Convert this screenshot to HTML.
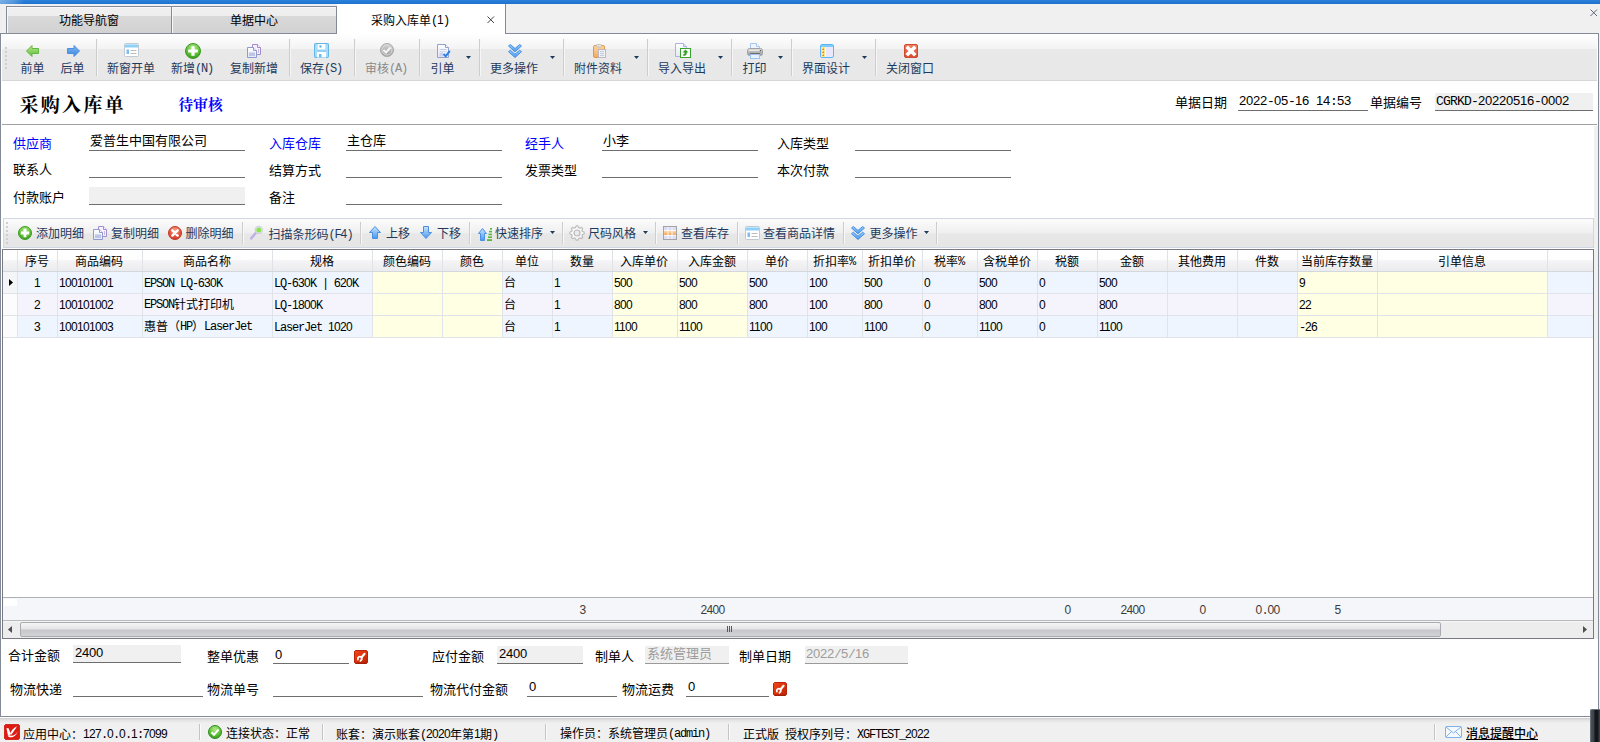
<!DOCTYPE html>
<html lang="zh-CN"><head><meta charset="utf-8"><title>采购入库单</title>
<style>
html,body{margin:0;padding:0}
body{width:1600px;height:742px;overflow:hidden;background:#f0f0f0;position:relative;
 font-family:"Liberation Mono","Noto Sans CJK SC",sans-serif;font-size:12px;color:#000}
.r{position:absolute}
.t{position:absolute;white-space:nowrap;line-height:14px;height:14px}
.c{text-align:center}
.l,.d{position:relative;top:-1px}
.l{letter-spacing:-1.2px}
.f13 .l{letter-spacing:-0.8px}
.d{font-family:'Liberation Sans',sans-serif;letter-spacing:-0.674px}
.f13 .d{letter-spacing:-0.23px}
.nv{color:#1e395b}
.bl{color:#0000ff}
.f13{font-size:13px;line-height:15px;height:15px}
.gy{color:#8a8a8a}
svg{position:absolute;overflow:visible}
</style></head>
<body>
<div class="r" style="left:0px;top:0px;width:1600px;height:4px;background:linear-gradient(#2b80d8,#1c73d0);"></div>
<div class="r" style="left:0px;top:0px;width:24px;height:4px;background:linear-gradient(100deg,rgba(255,255,255,.38) 0,rgba(255,255,255,.22) 55%,rgba(255,255,255,0) 100%);"></div>
<div class="r" style="left:6px;top:6px;width:166px;height:27px;box-sizing:border-box;border:1px solid #848a97;border-bottom:none;background:linear-gradient(#f0f0f0 0,#eeeeee 9px,#d9d9d9 9px,#d2d2d2 100%);box-shadow:inset 1px 1px 0 #f8f8f8"></div>
<div class="t c " style="left:6px;top:15px;width:166px;">功能导航窗</div>
<div class="r" style="left:171px;top:6px;width:166px;height:27px;box-sizing:border-box;border:1px solid #848a97;border-bottom:none;background:linear-gradient(#f0f0f0 0,#eeeeee 9px,#d9d9d9 9px,#d2d2d2 100%);box-shadow:inset 1px 1px 0 #f8f8f8"></div>
<div class="t c " style="left:171px;top:15px;width:166px;">单据中心</div>
<div class="r" style="left:0;top:33px;width:1599px;height:684px;box-sizing:border-box;border:1px solid #848a97;background:#fff"></div>
<div class="r" style="left:337px;top:4px;width:168px;height:30px;background:#fff;"></div>
<div class="r" style="left:505px;top:4px;width:1px;height:30px;background:#848a97;"></div>
<div class="t c " style="left:337px;top:14px;width:146px;">采购入库单<span class="l">(</span><span class="d">1</span><span class="l">)</span></div>
<svg style="left:486px;top:15px" width="10" height="10" viewBox="0 0 10 10"><path d="M1.5 1.5L8 8M8 1.5L1.5 8" stroke="#444" stroke-width="1" fill="none"/></svg>
<svg style="left:1589px;top:8px" width="10" height="10" viewBox="0 0 10 10"><path d="M1.5 1.5L8 8M8 1.5L1.5 8" stroke="#5d6678" stroke-width="1" fill="none"/></svg>
<div class="r" style="left:2px;top:34px;width:1595px;height:46px;background:linear-gradient(#ffffff 0,#f3f3f3 15px,#e9e9e9 15px,#e8e8e8 100%);"></div>
<div class="r" style="left:2px;top:80px;width:1595px;height:1px;background:#d6d6d6;"></div>
<div class="r" style="left:5px;top:47px;width:2px;height:2px;background:#cfcfcf;"></div>
<div class="r" style="left:5px;top:51px;width:2px;height:2px;background:#cfcfcf;"></div>
<div class="r" style="left:5px;top:55px;width:2px;height:2px;background:#cfcfcf;"></div>
<div class="r" style="left:5px;top:59px;width:2px;height:2px;background:#cfcfcf;"></div>
<div class="r" style="left:5px;top:63px;width:2px;height:2px;background:#cfcfcf;"></div>
<div class="r" style="left:5px;top:67px;width:2px;height:2px;background:#cfcfcf;"></div>
<div class="r" style="left:96px;top:39px;width:1px;height:37px;background:#cdcdcd;"></div>
<div class="r" style="left:97px;top:39px;width:1px;height:37px;background:#f6f6f6;"></div>
<div class="r" style="left:289px;top:39px;width:1px;height:37px;background:#cdcdcd;"></div>
<div class="r" style="left:290px;top:39px;width:1px;height:37px;background:#f6f6f6;"></div>
<div class="r" style="left:354px;top:39px;width:1px;height:37px;background:#cdcdcd;"></div>
<div class="r" style="left:355px;top:39px;width:1px;height:37px;background:#f6f6f6;"></div>
<div class="r" style="left:419px;top:39px;width:1px;height:37px;background:#cdcdcd;"></div>
<div class="r" style="left:420px;top:39px;width:1px;height:37px;background:#f6f6f6;"></div>
<div class="r" style="left:479px;top:39px;width:1px;height:37px;background:#cdcdcd;"></div>
<div class="r" style="left:480px;top:39px;width:1px;height:37px;background:#f6f6f6;"></div>
<div class="r" style="left:563px;top:39px;width:1px;height:37px;background:#cdcdcd;"></div>
<div class="r" style="left:564px;top:39px;width:1px;height:37px;background:#f6f6f6;"></div>
<div class="r" style="left:647px;top:39px;width:1px;height:37px;background:#cdcdcd;"></div>
<div class="r" style="left:648px;top:39px;width:1px;height:37px;background:#f6f6f6;"></div>
<div class="r" style="left:731px;top:39px;width:1px;height:37px;background:#cdcdcd;"></div>
<div class="r" style="left:732px;top:39px;width:1px;height:37px;background:#f6f6f6;"></div>
<div class="r" style="left:791px;top:39px;width:1px;height:37px;background:#cdcdcd;"></div>
<div class="r" style="left:792px;top:39px;width:1px;height:37px;background:#f6f6f6;"></div>
<div class="r" style="left:875px;top:39px;width:1px;height:37px;background:#cdcdcd;"></div>
<div class="r" style="left:876px;top:39px;width:1px;height:37px;background:#f6f6f6;"></div>
<div class="t c nv" style="left:-7.5px;top:63px;width:80px;">前单</div>
<div class="t c nv" style="left:32.5px;top:63px;width:80px;">后单</div>
<div class="t c nv" style="left:91px;top:63px;width:80px;">新窗开单</div>
<div class="t c nv" style="left:152px;top:63px;width:80px;">新增<span class="l">(N)</span></div>
<div class="t c nv" style="left:214px;top:63px;width:80px;">复制新增</div>
<div class="t c nv" style="left:281px;top:63px;width:80px;">保存<span class="l">(S)</span></div>
<div class="t c gy" style="left:346px;top:63px;width:80px;">审核<span class="l">(A)</span></div>
<div class="t c nv" style="left:402.5px;top:63px;width:80px;">引单</div>
<svg style="left:466px;top:56px" width="5" height="3" viewBox="0 0 5 3"><path d="M0 0H5L2.5 3Z" fill="#1e395b"/></svg>
<div class="t c nv" style="left:474px;top:63px;width:80px;">更多操作</div>
<svg style="left:550px;top:56px" width="5" height="3" viewBox="0 0 5 3"><path d="M0 0H5L2.5 3Z" fill="#1e395b"/></svg>
<div class="t c nv" style="left:558px;top:63px;width:80px;">附件资料</div>
<svg style="left:634px;top:56px" width="5" height="3" viewBox="0 0 5 3"><path d="M0 0H5L2.5 3Z" fill="#1e395b"/></svg>
<div class="t c nv" style="left:642px;top:63px;width:80px;">导入导出</div>
<svg style="left:718px;top:56px" width="5" height="3" viewBox="0 0 5 3"><path d="M0 0H5L2.5 3Z" fill="#1e395b"/></svg>
<div class="t c nv" style="left:714.5px;top:63px;width:80px;">打印</div>
<svg style="left:778px;top:56px" width="5" height="3" viewBox="0 0 5 3"><path d="M0 0H5L2.5 3Z" fill="#1e395b"/></svg>
<div class="t c nv" style="left:786px;top:63px;width:80px;">界面设计</div>
<svg style="left:862px;top:56px" width="5" height="3" viewBox="0 0 5 3"><path d="M0 0H5L2.5 3Z" fill="#1e395b"/></svg>
<div class="t c nv" style="left:870px;top:63px;width:80px;">关闭窗口</div>
<div class="t " style="left:19.5px;top:93px;letter-spacing:2.3px;font:bold 19px/26px 'Liberation Serif','Noto Serif CJK SC',serif;height:26px">采购入库单</div>
<div class="t bl" style="left:178.5px;top:96px;font:bold 14.7px/18px 'Liberation Serif','Noto Serif CJK SC',serif;height:18px">待审核</div>
<div class="t f13" style="left:1175px;top:96px;">单据日期</div>
<div class="t f13" style="left:1370px;top:96px;">单据编号</div>
<div class="t f13" style="left:1239px;top:94px;"><span class="d">2022</span><span class="l">-</span><span class="d">05</span><span class="l">-</span><span class="d">16</span><span class="l">&nbsp;</span><span class="d">14</span><span class="l">:</span><span class="d">53</span></div>
<div class="r" style="left:1238px;top:110px;width:130px;height:1px;background:#6e6e6e;"></div>
<div class="r" style="left:1435px;top:93px;width:158px;height:17px;background:#f0f0f0;"></div>
<div class="r" style="left:1435px;top:110px;width:158px;height:1px;background:#6e6e6e;"></div>
<div class="t f13" style="left:1436px;top:94px;"><span class="l">CGRKD-</span><span class="d">20220516</span><span class="l">-</span><span class="d">0002</span></div>
<div class="r" style="left:2px;top:124px;width:1595px;height:1px;background:#a0a0a0;"></div>
<div class="t f13 bl" style="left:13px;top:137px;">供应商</div>
<div class="r" style="left:89px;top:150px;width:156px;height:1px;background:#6e6e6e;"></div>
<div class="t f13" style="left:90px;top:134px;">爱普生中国有限公司</div>
<div class="t f13 bl" style="left:269px;top:137px;">入库仓库</div>
<div class="r" style="left:346px;top:150px;width:156px;height:1px;background:#6e6e6e;"></div>
<div class="t f13" style="left:347px;top:134px;">主仓库</div>
<div class="t f13 bl" style="left:525px;top:137px;">经手人</div>
<div class="r" style="left:602px;top:150px;width:156px;height:1px;background:#6e6e6e;"></div>
<div class="t f13" style="left:603px;top:134px;">小李</div>
<div class="t f13" style="left:777px;top:137px;">入库类型</div>
<div class="r" style="left:855px;top:150px;width:156px;height:1px;background:#6e6e6e;"></div>
<div class="t f13" style="left:13px;top:163px;">联系人</div>
<div class="r" style="left:89px;top:177px;width:156px;height:1px;background:#6e6e6e;"></div>
<div class="t f13" style="left:269px;top:164px;">结算方式</div>
<div class="r" style="left:346px;top:177px;width:156px;height:1px;background:#6e6e6e;"></div>
<div class="t f13" style="left:525px;top:164px;">发票类型</div>
<div class="r" style="left:602px;top:177px;width:156px;height:1px;background:#6e6e6e;"></div>
<div class="t f13" style="left:777px;top:164px;">本次付款</div>
<div class="r" style="left:855px;top:177px;width:156px;height:1px;background:#6e6e6e;"></div>
<div class="t f13" style="left:13px;top:191px;">付款账户</div>
<div class="r" style="left:89px;top:187px;width:156px;height:17px;background:#f0f0f0;"></div>
<div class="r" style="left:89px;top:204px;width:156px;height:1px;background:#6e6e6e;"></div>
<div class="t f13" style="left:269px;top:191px;">备注</div>
<div class="r" style="left:346px;top:204px;width:156px;height:1px;background:#6e6e6e;"></div>
<div class="r" style="left:1594px;top:126px;width:4px;height:513px;background:#f0f0f0;"></div>
<div class="r" style="left:3px;top:218px;width:1591px;height:30px;background:linear-gradient(#fcfcfc 0,#efefef 14px,#e7e7e7 15px,#e6e6e6 100%);box-sizing:border-box;border:1px solid #cfd7e2"></div>
<div class="r" style="left:6px;top:222px;width:2px;height:2px;background:#cfcfcf;"></div>
<div class="r" style="left:6px;top:226px;width:2px;height:2px;background:#cfcfcf;"></div>
<div class="r" style="left:6px;top:230px;width:2px;height:2px;background:#cfcfcf;"></div>
<div class="r" style="left:6px;top:234px;width:2px;height:2px;background:#cfcfcf;"></div>
<div class="r" style="left:6px;top:238px;width:2px;height:2px;background:#cfcfcf;"></div>
<div class="r" style="left:6px;top:242px;width:2px;height:2px;background:#cfcfcf;"></div>
<div class="r" style="left:242px;top:222px;width:1px;height:22px;background:#cdcdcd;"></div>
<div class="r" style="left:243px;top:222px;width:1px;height:22px;background:#f8f8f8;"></div>
<div class="r" style="left:360px;top:222px;width:1px;height:22px;background:#cdcdcd;"></div>
<div class="r" style="left:361px;top:222px;width:1px;height:22px;background:#f8f8f8;"></div>
<div class="r" style="left:469px;top:222px;width:1px;height:22px;background:#cdcdcd;"></div>
<div class="r" style="left:470px;top:222px;width:1px;height:22px;background:#f8f8f8;"></div>
<div class="r" style="left:562px;top:222px;width:1px;height:22px;background:#cdcdcd;"></div>
<div class="r" style="left:563px;top:222px;width:1px;height:22px;background:#f8f8f8;"></div>
<div class="r" style="left:655px;top:222px;width:1px;height:22px;background:#cdcdcd;"></div>
<div class="r" style="left:656px;top:222px;width:1px;height:22px;background:#f8f8f8;"></div>
<div class="r" style="left:737px;top:222px;width:1px;height:22px;background:#cdcdcd;"></div>
<div class="r" style="left:738px;top:222px;width:1px;height:22px;background:#f8f8f8;"></div>
<div class="r" style="left:843px;top:222px;width:1px;height:22px;background:#cdcdcd;"></div>
<div class="r" style="left:844px;top:222px;width:1px;height:22px;background:#f8f8f8;"></div>
<div class="r" style="left:936px;top:222px;width:1px;height:22px;background:#cdcdcd;"></div>
<div class="r" style="left:937px;top:222px;width:1px;height:22px;background:#f8f8f8;"></div>
<div class="t nv" style="left:36px;top:228px;">添加明细</div>
<div class="t nv" style="left:111px;top:228px;">复制明细</div>
<div class="t nv" style="left:185.5px;top:228px;">删除明细</div>
<div class="t nv" style="left:268.5px;top:228px;">扫描条形码<span class="l">(F</span><span class="d">4</span><span class="l">)</span></div>
<div class="t nv" style="left:386px;top:228px;">上移</div>
<div class="t nv" style="left:437px;top:228px;">下移</div>
<div class="t nv" style="left:495px;top:228px;">快速排序</div>
<div class="t nv" style="left:588px;top:228px;">尺码风格</div>
<div class="t nv" style="left:681px;top:228px;">查看库存</div>
<div class="t nv" style="left:763px;top:228px;">查看商品详情</div>
<div class="t nv" style="left:869.5px;top:228px;">更多操作</div>
<svg style="left:550px;top:231px" width="5" height="3" viewBox="0 0 5 3"><path d="M0 0H5L2.5 3Z" fill="#1e395b"/></svg>
<svg style="left:643px;top:231px" width="5" height="3" viewBox="0 0 5 3"><path d="M0 0H5L2.5 3Z" fill="#1e395b"/></svg>
<svg style="left:924px;top:231px" width="5" height="3" viewBox="0 0 5 3"><path d="M0 0H5L2.5 3Z" fill="#1e395b"/></svg>
<div class="r" style="left:2px;top:249px;width:1592px;height:390px;background:#fff;box-sizing:border-box;border:1px solid #777a82"></div>
<div class="r" style="left:3px;top:250px;width:1590px;height:21px;background:linear-gradient(#ffffff 0,#fdfdfd 45%,#f4f4f6 52%,#ececef 100%);"></div>
<div class="r" style="left:3px;top:271px;width:1590px;height:1px;background:#d3d7de;"></div>
<div class="r" style="left:17px;top:250px;width:1px;height:21px;background:#e0e2e7;"></div>
<div class="r" style="left:57px;top:250px;width:1px;height:21px;background:#e0e2e7;"></div>
<div class="r" style="left:142px;top:250px;width:1px;height:21px;background:#e0e2e7;"></div>
<div class="r" style="left:272px;top:250px;width:1px;height:21px;background:#e0e2e7;"></div>
<div class="r" style="left:372px;top:250px;width:1px;height:21px;background:#e0e2e7;"></div>
<div class="r" style="left:442px;top:250px;width:1px;height:21px;background:#e0e2e7;"></div>
<div class="r" style="left:502px;top:250px;width:1px;height:21px;background:#e0e2e7;"></div>
<div class="r" style="left:552px;top:250px;width:1px;height:21px;background:#e0e2e7;"></div>
<div class="r" style="left:612px;top:250px;width:1px;height:21px;background:#e0e2e7;"></div>
<div class="r" style="left:677px;top:250px;width:1px;height:21px;background:#e0e2e7;"></div>
<div class="r" style="left:747px;top:250px;width:1px;height:21px;background:#e0e2e7;"></div>
<div class="r" style="left:807px;top:250px;width:1px;height:21px;background:#e0e2e7;"></div>
<div class="r" style="left:862px;top:250px;width:1px;height:21px;background:#e0e2e7;"></div>
<div class="r" style="left:922px;top:250px;width:1px;height:21px;background:#e0e2e7;"></div>
<div class="r" style="left:977px;top:250px;width:1px;height:21px;background:#e0e2e7;"></div>
<div class="r" style="left:1037px;top:250px;width:1px;height:21px;background:#e0e2e7;"></div>
<div class="r" style="left:1097px;top:250px;width:1px;height:21px;background:#e0e2e7;"></div>
<div class="r" style="left:1167px;top:250px;width:1px;height:21px;background:#e0e2e7;"></div>
<div class="r" style="left:1237px;top:250px;width:1px;height:21px;background:#e0e2e7;"></div>
<div class="r" style="left:1297px;top:250px;width:1px;height:21px;background:#e0e2e7;"></div>
<div class="r" style="left:1377px;top:250px;width:1px;height:21px;background:#e0e2e7;"></div>
<div class="r" style="left:1547px;top:250px;width:1px;height:21px;background:#e0e2e7;"></div>
<div class="t " style="left:25px;top:256px;">序号</div>
<div class="t " style="left:75px;top:256px;">商品编码</div>
<div class="t " style="left:183px;top:256px;">商品名称</div>
<div class="t " style="left:310px;top:256px;">规格</div>
<div class="t " style="left:383px;top:256px;">颜色编码</div>
<div class="t " style="left:460px;top:256px;">颜色</div>
<div class="t " style="left:515px;top:256px;">单位</div>
<div class="t " style="left:570px;top:256px;">数量</div>
<div class="t " style="left:620px;top:256px;">入库单价</div>
<div class="t " style="left:688px;top:256px;">入库金额</div>
<div class="t " style="left:765px;top:256px;">单价</div>
<div class="t " style="left:813px;top:256px;">折扣率<span class="l">%</span></div>
<div class="t " style="left:868px;top:256px;">折扣单价</div>
<div class="t " style="left:934px;top:256px;">税率<span class="l">%</span></div>
<div class="t " style="left:983px;top:256px;">含税单价</div>
<div class="t " style="left:1055px;top:256px;">税额</div>
<div class="t " style="left:1120px;top:256px;">金额</div>
<div class="t " style="left:1178px;top:256px;">其他费用</div>
<div class="t " style="left:1255px;top:256px;">件数</div>
<div class="t " style="left:1301px;top:256px;">当前库存数量</div>
<div class="t " style="left:1438px;top:256px;">引单信息</div>
<div class="r" style="left:3px;top:272px;width:14px;height:21px;background:#f4f5f7;"></div>
<div class="r" style="left:18px;top:272px;width:1575px;height:21px;background:#eef5fe;"></div>
<div class="r" style="left:1298px;top:272px;width:79px;height:21px;background:#ffffe3;"></div>
<div class="r" style="left:373px;top:272px;width:69px;height:21px;background:#ffffe3;"></div>
<div class="r" style="left:443px;top:272px;width:59px;height:21px;background:#ffffe3;"></div>
<div class="r" style="left:1378px;top:272px;width:169px;height:21px;background:#ffffe3;"></div>
<div class="r" style="left:613px;top:272px;width:64px;height:21px;background:#ffffe3;"></div>
<div class="r" style="left:678px;top:272px;width:69px;height:21px;background:#ffffe3;"></div>
<div class="r" style="left:3px;top:293px;width:1590px;height:1px;background:#e0e3e8;"></div>
<div class="r" style="left:17px;top:272px;width:1px;height:21px;background:#e0e3e8;"></div>
<div class="r" style="left:57px;top:272px;width:1px;height:21px;background:#e0e3e8;"></div>
<div class="r" style="left:142px;top:272px;width:1px;height:21px;background:#e0e3e8;"></div>
<div class="r" style="left:272px;top:272px;width:1px;height:21px;background:#e0e3e8;"></div>
<div class="r" style="left:372px;top:272px;width:1px;height:21px;background:#e0e3e8;"></div>
<div class="r" style="left:442px;top:272px;width:1px;height:21px;background:#e0e3e8;"></div>
<div class="r" style="left:502px;top:272px;width:1px;height:21px;background:#e0e3e8;"></div>
<div class="r" style="left:552px;top:272px;width:1px;height:21px;background:#e0e3e8;"></div>
<div class="r" style="left:612px;top:272px;width:1px;height:21px;background:#e0e3e8;"></div>
<div class="r" style="left:677px;top:272px;width:1px;height:21px;background:#e0e3e8;"></div>
<div class="r" style="left:747px;top:272px;width:1px;height:21px;background:#e0e3e8;"></div>
<div class="r" style="left:807px;top:272px;width:1px;height:21px;background:#e0e3e8;"></div>
<div class="r" style="left:862px;top:272px;width:1px;height:21px;background:#e0e3e8;"></div>
<div class="r" style="left:922px;top:272px;width:1px;height:21px;background:#e0e3e8;"></div>
<div class="r" style="left:977px;top:272px;width:1px;height:21px;background:#e0e3e8;"></div>
<div class="r" style="left:1037px;top:272px;width:1px;height:21px;background:#e0e3e8;"></div>
<div class="r" style="left:1097px;top:272px;width:1px;height:21px;background:#e0e3e8;"></div>
<div class="r" style="left:1167px;top:272px;width:1px;height:21px;background:#e0e3e8;"></div>
<div class="r" style="left:1237px;top:272px;width:1px;height:21px;background:#e0e3e8;"></div>
<div class="r" style="left:1297px;top:272px;width:1px;height:21px;background:#e0e3e8;"></div>
<div class="r" style="left:1377px;top:272px;width:1px;height:21px;background:#e0e3e8;"></div>
<div class="r" style="left:1547px;top:272px;width:1px;height:21px;background:#e0e3e8;"></div>
<div class="t " style="left:34px;top:277px;"><span class="d">1</span></div>
<div class="t " style="left:59px;top:277px;"><span class="d">100101001</span></div>
<div class="t " style="left:144px;top:277px;"><span class="l">EPSON&nbsp;LQ-</span><span class="d">630</span><span class="l">K</span></div>
<div class="t " style="left:274px;top:277px;"><span class="l">LQ-</span><span class="d">630</span><span class="l">K&nbsp;|&nbsp;</span><span class="d">620</span><span class="l">K</span></div>
<div class="t " style="left:504px;top:277px;">台</div>
<div class="t " style="left:554px;top:277px;"><span class="d">1</span></div>
<div class="t " style="left:614px;top:277px;"><span class="d">500</span></div>
<div class="t " style="left:679px;top:277px;"><span class="d">500</span></div>
<div class="t " style="left:749px;top:277px;"><span class="d">500</span></div>
<div class="t " style="left:809px;top:277px;"><span class="d">100</span></div>
<div class="t " style="left:864px;top:277px;"><span class="d">500</span></div>
<div class="t " style="left:924px;top:277px;"><span class="d">0</span></div>
<div class="t " style="left:979px;top:277px;"><span class="d">500</span></div>
<div class="t " style="left:1039px;top:277px;"><span class="d">0</span></div>
<div class="t " style="left:1099px;top:277px;"><span class="d">500</span></div>
<div class="t " style="left:1299px;top:277px;"><span class="d">9</span></div>
<div class="r" style="left:3px;top:294px;width:14px;height:21px;background:#fcfcfd;"></div>
<div class="r" style="left:18px;top:294px;width:1575px;height:21px;background:#f5f3fc;"></div>
<div class="r" style="left:1298px;top:294px;width:79px;height:21px;background:#ffffe3;"></div>
<div class="r" style="left:373px;top:294px;width:69px;height:21px;background:#ffffe3;"></div>
<div class="r" style="left:443px;top:294px;width:59px;height:21px;background:#ffffe3;"></div>
<div class="r" style="left:1378px;top:294px;width:169px;height:21px;background:#ffffe3;"></div>
<div class="r" style="left:613px;top:294px;width:64px;height:21px;background:#ffffe3;"></div>
<div class="r" style="left:678px;top:294px;width:69px;height:21px;background:#ffffe3;"></div>
<div class="r" style="left:3px;top:315px;width:1590px;height:1px;background:#e0e3e8;"></div>
<div class="r" style="left:17px;top:294px;width:1px;height:21px;background:#e0e3e8;"></div>
<div class="r" style="left:57px;top:294px;width:1px;height:21px;background:#e0e3e8;"></div>
<div class="r" style="left:142px;top:294px;width:1px;height:21px;background:#e0e3e8;"></div>
<div class="r" style="left:272px;top:294px;width:1px;height:21px;background:#e0e3e8;"></div>
<div class="r" style="left:372px;top:294px;width:1px;height:21px;background:#e0e3e8;"></div>
<div class="r" style="left:442px;top:294px;width:1px;height:21px;background:#e0e3e8;"></div>
<div class="r" style="left:502px;top:294px;width:1px;height:21px;background:#e0e3e8;"></div>
<div class="r" style="left:552px;top:294px;width:1px;height:21px;background:#e0e3e8;"></div>
<div class="r" style="left:612px;top:294px;width:1px;height:21px;background:#e0e3e8;"></div>
<div class="r" style="left:677px;top:294px;width:1px;height:21px;background:#e0e3e8;"></div>
<div class="r" style="left:747px;top:294px;width:1px;height:21px;background:#e0e3e8;"></div>
<div class="r" style="left:807px;top:294px;width:1px;height:21px;background:#e0e3e8;"></div>
<div class="r" style="left:862px;top:294px;width:1px;height:21px;background:#e0e3e8;"></div>
<div class="r" style="left:922px;top:294px;width:1px;height:21px;background:#e0e3e8;"></div>
<div class="r" style="left:977px;top:294px;width:1px;height:21px;background:#e0e3e8;"></div>
<div class="r" style="left:1037px;top:294px;width:1px;height:21px;background:#e0e3e8;"></div>
<div class="r" style="left:1097px;top:294px;width:1px;height:21px;background:#e0e3e8;"></div>
<div class="r" style="left:1167px;top:294px;width:1px;height:21px;background:#e0e3e8;"></div>
<div class="r" style="left:1237px;top:294px;width:1px;height:21px;background:#e0e3e8;"></div>
<div class="r" style="left:1297px;top:294px;width:1px;height:21px;background:#e0e3e8;"></div>
<div class="r" style="left:1377px;top:294px;width:1px;height:21px;background:#e0e3e8;"></div>
<div class="r" style="left:1547px;top:294px;width:1px;height:21px;background:#e0e3e8;"></div>
<div class="t " style="left:34px;top:299px;"><span class="d">2</span></div>
<div class="t " style="left:59px;top:299px;"><span class="d">100101002</span></div>
<div class="t " style="left:144px;top:299px;"><span class="l">EPSON</span>针式打印机</div>
<div class="t " style="left:274px;top:299px;"><span class="l">LQ-</span><span class="d">1800</span><span class="l">K</span></div>
<div class="t " style="left:504px;top:299px;">台</div>
<div class="t " style="left:554px;top:299px;"><span class="d">1</span></div>
<div class="t " style="left:614px;top:299px;"><span class="d">800</span></div>
<div class="t " style="left:679px;top:299px;"><span class="d">800</span></div>
<div class="t " style="left:749px;top:299px;"><span class="d">800</span></div>
<div class="t " style="left:809px;top:299px;"><span class="d">100</span></div>
<div class="t " style="left:864px;top:299px;"><span class="d">800</span></div>
<div class="t " style="left:924px;top:299px;"><span class="d">0</span></div>
<div class="t " style="left:979px;top:299px;"><span class="d">800</span></div>
<div class="t " style="left:1039px;top:299px;"><span class="d">0</span></div>
<div class="t " style="left:1099px;top:299px;"><span class="d">800</span></div>
<div class="t " style="left:1299px;top:299px;"><span class="d">22</span></div>
<div class="r" style="left:3px;top:316px;width:14px;height:21px;background:#fcfcfd;"></div>
<div class="r" style="left:18px;top:316px;width:1575px;height:21px;background:#eef5fe;"></div>
<div class="r" style="left:1298px;top:316px;width:79px;height:21px;background:#ffffe3;"></div>
<div class="r" style="left:373px;top:316px;width:69px;height:21px;background:#ffffe3;"></div>
<div class="r" style="left:443px;top:316px;width:59px;height:21px;background:#ffffe3;"></div>
<div class="r" style="left:1378px;top:316px;width:169px;height:21px;background:#ffffe3;"></div>
<div class="r" style="left:613px;top:316px;width:64px;height:21px;background:#ffffe3;"></div>
<div class="r" style="left:678px;top:316px;width:69px;height:21px;background:#ffffe3;"></div>
<div class="r" style="left:3px;top:337px;width:1590px;height:1px;background:#e0e3e8;"></div>
<div class="r" style="left:17px;top:316px;width:1px;height:21px;background:#e0e3e8;"></div>
<div class="r" style="left:57px;top:316px;width:1px;height:21px;background:#e0e3e8;"></div>
<div class="r" style="left:142px;top:316px;width:1px;height:21px;background:#e0e3e8;"></div>
<div class="r" style="left:272px;top:316px;width:1px;height:21px;background:#e0e3e8;"></div>
<div class="r" style="left:372px;top:316px;width:1px;height:21px;background:#e0e3e8;"></div>
<div class="r" style="left:442px;top:316px;width:1px;height:21px;background:#e0e3e8;"></div>
<div class="r" style="left:502px;top:316px;width:1px;height:21px;background:#e0e3e8;"></div>
<div class="r" style="left:552px;top:316px;width:1px;height:21px;background:#e0e3e8;"></div>
<div class="r" style="left:612px;top:316px;width:1px;height:21px;background:#e0e3e8;"></div>
<div class="r" style="left:677px;top:316px;width:1px;height:21px;background:#e0e3e8;"></div>
<div class="r" style="left:747px;top:316px;width:1px;height:21px;background:#e0e3e8;"></div>
<div class="r" style="left:807px;top:316px;width:1px;height:21px;background:#e0e3e8;"></div>
<div class="r" style="left:862px;top:316px;width:1px;height:21px;background:#e0e3e8;"></div>
<div class="r" style="left:922px;top:316px;width:1px;height:21px;background:#e0e3e8;"></div>
<div class="r" style="left:977px;top:316px;width:1px;height:21px;background:#e0e3e8;"></div>
<div class="r" style="left:1037px;top:316px;width:1px;height:21px;background:#e0e3e8;"></div>
<div class="r" style="left:1097px;top:316px;width:1px;height:21px;background:#e0e3e8;"></div>
<div class="r" style="left:1167px;top:316px;width:1px;height:21px;background:#e0e3e8;"></div>
<div class="r" style="left:1237px;top:316px;width:1px;height:21px;background:#e0e3e8;"></div>
<div class="r" style="left:1297px;top:316px;width:1px;height:21px;background:#e0e3e8;"></div>
<div class="r" style="left:1377px;top:316px;width:1px;height:21px;background:#e0e3e8;"></div>
<div class="r" style="left:1547px;top:316px;width:1px;height:21px;background:#e0e3e8;"></div>
<div class="t " style="left:34px;top:321px;"><span class="d">3</span></div>
<div class="t " style="left:59px;top:321px;"><span class="d">100101003</span></div>
<div class="t " style="left:144px;top:321px;">惠普（<span class="l">HP</span>）<span class="l">LaserJet</span></div>
<div class="t " style="left:274px;top:321px;"><span class="l">LaserJet&nbsp;</span><span class="d">1020</span></div>
<div class="t " style="left:504px;top:321px;">台</div>
<div class="t " style="left:554px;top:321px;"><span class="d">1</span></div>
<div class="t " style="left:614px;top:321px;"><span class="d">1100</span></div>
<div class="t " style="left:679px;top:321px;"><span class="d">1100</span></div>
<div class="t " style="left:749px;top:321px;"><span class="d">1100</span></div>
<div class="t " style="left:809px;top:321px;"><span class="d">100</span></div>
<div class="t " style="left:864px;top:321px;"><span class="d">1100</span></div>
<div class="t " style="left:924px;top:321px;"><span class="d">0</span></div>
<div class="t " style="left:979px;top:321px;"><span class="d">1100</span></div>
<div class="t " style="left:1039px;top:321px;"><span class="d">0</span></div>
<div class="t " style="left:1099px;top:321px;"><span class="d">1100</span></div>
<div class="t " style="left:1299px;top:321px;"><span class="l">-</span><span class="d">26</span></div>
<svg style="left:9px;top:279px" width="4" height="7" viewBox="0 0 4 7"><path d="M0 0L4 3.5L0 7Z" fill="#000"/></svg>
<div class="r" style="left:3px;top:597px;width:1590px;height:1px;background:#b0b1b4;"></div>
<div class="r" style="left:3px;top:598px;width:1590px;height:22px;background:#f5f6f9;"></div>
<div class="r" style="left:3px;top:620px;width:1590px;height:1px;background:#b9babd;"></div>
<div class="t c " style="left:553px;top:604px;width:59px;color:#3c3c3c"><span class="d">3</span></div>
<div class="t c " style="left:678px;top:604px;width:69px;color:#3c3c3c"><span class="d">2400</span></div>
<div class="t c " style="left:1038px;top:604px;width:59px;color:#3c3c3c"><span class="d">0</span></div>
<div class="t c " style="left:1098px;top:604px;width:69px;color:#3c3c3c"><span class="d">2400</span></div>
<div class="t c " style="left:1168px;top:604px;width:69px;color:#3c3c3c"><span class="d">0</span></div>
<div class="t c " style="left:1238px;top:604px;width:59px;color:#3c3c3c"><span class="d">0</span><span class="l">.</span><span class="d">00</span></div>
<div class="t c " style="left:1298px;top:604px;width:79px;color:#3c3c3c"><span class="d">5</span></div>
<div class="r" style="left:4px;top:599px;width:13px;height:7px;background:#fff;"></div>
<div class="r" style="left:3px;top:621px;width:1590px;height:17px;background:linear-gradient(#f6f6f6 0,#ededed 2px,#ededed 100%);"></div>
<div class="r" style="left:20px;top:622px;width:1421px;height:15px;box-sizing:border-box;border:1px solid #a9abb0;border-radius:2px;background:linear-gradient(#f5f5f6 0,#e6e6e8 42%,#c8c8cc 58%,#d4d4d7 100%)"></div>
<div class="r" style="left:727px;top:626px;width:1px;height:6px;background:#55585e;"></div>
<div class="r" style="left:729px;top:626px;width:1px;height:6px;background:#55585e;"></div>
<div class="r" style="left:731px;top:626px;width:1px;height:6px;background:#55585e;"></div>
<svg style="left:8px;top:626px" width="4" height="7" viewBox="0 0 4 7"><path d="M4 0L0 3.5L4 7Z" fill="#4d4d4d"/></svg>
<svg style="left:1583px;top:626px" width="4" height="7" viewBox="0 0 4 7"><path d="M0 0L4 3.5L0 7Z" fill="#4d4d4d"/></svg>
<div class="t f13" style="left:8px;top:649px;">合计金额</div>
<div class="r" style="left:73px;top:645px;width:108px;height:17px;background:#f0f0f0;"></div>
<div class="r" style="left:73px;top:662px;width:108px;height:1px;background:#6e6e6e;"></div>
<div class="t f13" style="left:75px;top:646px;"><span class="d">2400</span></div>
<div class="t f13" style="left:207px;top:650px;">整单优惠</div>
<div class="r" style="left:273px;top:663px;width:76px;height:1px;background:#6e6e6e;"></div>
<div class="t f13" style="left:275px;top:648px;"><span class="d">0</span></div>
<div class="t f13" style="left:432px;top:650px;">应付金额</div>
<div class="r" style="left:497px;top:646px;width:86px;height:17px;background:#f0f0f0;"></div>
<div class="r" style="left:497px;top:663px;width:86px;height:1px;background:#6e6e6e;"></div>
<div class="t f13" style="left:499px;top:647px;"><span class="d">2400</span></div>
<div class="t f13" style="left:595px;top:650px;">制单人</div>
<div class="r" style="left:645px;top:646px;width:84px;height:17px;background:#f0f0f0;"></div>
<div class="r" style="left:645px;top:663px;width:84px;height:1px;background:#9a9a9a;"></div>
<div class="t f13" style="left:647px;top:647px;color:#9c9c9c">系统管理员</div>
<div class="t f13" style="left:739px;top:650px;">制单日期</div>
<div class="r" style="left:805px;top:646px;width:103px;height:17px;background:#f0f0f0;"></div>
<div class="r" style="left:805px;top:663px;width:103px;height:1px;background:#9a9a9a;"></div>
<div class="t f13" style="left:806px;top:647px;color:#9c9c9c"><span class="d">2022</span><span class="l">/</span><span class="d">5</span><span class="l">/</span><span class="d">16</span></div>
<div class="t f13" style="left:10px;top:683px;">物流快递</div>
<div class="r" style="left:73px;top:696px;width:130px;height:1px;background:#6e6e6e;"></div>
<div class="t f13" style="left:207px;top:683px;">物流单号</div>
<div class="r" style="left:273px;top:696px;width:150px;height:1px;background:#6e6e6e;"></div>
<div class="t f13" style="left:430px;top:683px;">物流代付金额</div>
<div class="r" style="left:527px;top:696px;width:90px;height:1px;background:#6e6e6e;"></div>
<div class="t f13" style="left:529px;top:680px;"><span class="d">0</span></div>
<div class="t f13" style="left:622px;top:683px;">物流运费</div>
<div class="r" style="left:686px;top:696px;width:83px;height:1px;background:#6e6e6e;"></div>
<div class="t f13" style="left:688px;top:680px;"><span class="d">0</span></div>
<svg style="left:354px;top:650px" width="14" height="14" viewBox="0 0 14 14"><defs><linearGradient id="rg354" x1="0" y1="0" x2="1" y2="1"><stop offset="0" stop-color="#f5481c"/><stop offset="0.55" stop-color="#d8300c"/><stop offset="1" stop-color="#b82606"/></linearGradient></defs><path d="M1.5 0.5H12.5L13.5 1.5V12.5L12.5 13.5H1.5L0.5 12.5V1.5Z" fill="url(#rg354)" stroke="#b8260a"/><path d="M1.5 13.2H12.5" stroke="#8f1a04" stroke-width="0.8"/><path d="M10.6 3.8L7.6 7.2" stroke="#fff" stroke-width="2.1" stroke-linecap="round" fill="none"/><path d="M8 7.4Q5.2 5.8 3.9 7.8L3.9 9.6M7.4 7.4Q8.6 9.2 6.4 10.9" stroke="#fff" stroke-width="1.7" stroke-linecap="round" fill="none"/></svg>
<svg style="left:773px;top:682px" width="14" height="14" viewBox="0 0 14 14"><defs><linearGradient id="rg773" x1="0" y1="0" x2="1" y2="1"><stop offset="0" stop-color="#f5481c"/><stop offset="0.55" stop-color="#d8300c"/><stop offset="1" stop-color="#b82606"/></linearGradient></defs><path d="M1.5 0.5H12.5L13.5 1.5V12.5L12.5 13.5H1.5L0.5 12.5V1.5Z" fill="url(#rg773)" stroke="#b8260a"/><path d="M1.5 13.2H12.5" stroke="#8f1a04" stroke-width="0.8"/><path d="M10.6 3.8L7.6 7.2" stroke="#fff" stroke-width="2.1" stroke-linecap="round" fill="none"/><path d="M8 7.4Q5.2 5.8 3.9 7.8L3.9 9.6M7.4 7.4Q8.6 9.2 6.4 10.9" stroke="#fff" stroke-width="1.7" stroke-linecap="round" fill="none"/></svg>
<div class="r" style="left:0px;top:717px;width:1600px;height:1px;background:#fdfdfd;"></div>
<div class="r" style="left:0px;top:718px;width:1600px;height:5px;background:linear-gradient(#cdcdcd 0,#e2e2e2 40%,#f0f0f0 100%);"></div>
<div class="t " style="left:23px;top:728px;">应用中心：<span class="d">127</span><span class="l">.</span><span class="d">0</span><span class="l">.</span><span class="d">0</span><span class="l">.</span><span class="d">1</span><span class="l">:</span><span class="d">7099</span></div>
<div class="t " style="left:226px;top:728px;">连接状态：正常</div>
<div class="t " style="left:336px;top:728px;">账套：演示账套<span class="l">(</span><span class="d">2020</span>年第<span class="d">1</span>期<span class="l">)</span></div>
<div class="t " style="left:560px;top:728px;">操作员：系统管理员<span class="l">(admin)</span></div>
<div class="t " style="left:743px;top:728px;">正式版<span class="l">&nbsp;</span>授权序列号：<span class="l">XGFTEST_</span><span class="d">2022</span></div>
<div class="t " style="left:1466px;top:728px;text-decoration:underline;font-weight:500">消息提醒中心</div>
<div class="r" style="left:199px;top:724px;width:1px;height:16px;background:#c4c4c4;"></div>
<div class="r" style="left:200px;top:724px;width:1px;height:16px;background:#fbfbfb;"></div>
<div class="r" style="left:322px;top:724px;width:1px;height:16px;background:#c4c4c4;"></div>
<div class="r" style="left:323px;top:724px;width:1px;height:16px;background:#fbfbfb;"></div>
<div class="r" style="left:545px;top:724px;width:1px;height:16px;background:#c4c4c4;"></div>
<div class="r" style="left:546px;top:724px;width:1px;height:16px;background:#fbfbfb;"></div>
<div class="r" style="left:728px;top:724px;width:1px;height:16px;background:#c4c4c4;"></div>
<div class="r" style="left:729px;top:724px;width:1px;height:16px;background:#fbfbfb;"></div>
<div class="r" style="left:1434px;top:724px;width:1px;height:16px;background:#c4c4c4;"></div>
<div class="r" style="left:1435px;top:724px;width:1px;height:16px;background:#fbfbfb;"></div>
<div class="r" style="left:1590px;top:709px;width:10px;height:33px;background:linear-gradient(90deg,#4a5058 0,#3a4048 3px,#14161a 4px,#14161a 7px,#3a4048 8px);border-left:1px solid #6a7078;border-top:1px solid #6a7078;box-sizing:border-box;border-top-left-radius:2px"></div>
<svg width="0" height="0" style="position:absolute"><defs>
<linearGradient id="gGreen" x1="0" y1="0" x2="0" y2="1"><stop offset="0" stop-color="#a6e27a"/><stop offset="1" stop-color="#3d9e1e"/></linearGradient>
<radialGradient id="gGreenR" cx="0.5" cy="0.3" r="0.75"><stop offset="0" stop-color="#b4ea8a"/><stop offset="0.6" stop-color="#5cbf35"/><stop offset="1" stop-color="#2f8f18"/></radialGradient>
<radialGradient id="gRedR" cx="0.5" cy="0.3" r="0.75"><stop offset="0" stop-color="#fba58a"/><stop offset="0.6" stop-color="#e8523a"/><stop offset="1" stop-color="#c23220"/></radialGradient>
<linearGradient id="gBlue" x1="0" y1="0" x2="0" y2="1"><stop offset="0" stop-color="#a4d3fb"/><stop offset="1" stop-color="#3b8ae6"/></linearGradient>
<linearGradient id="gBlueH" x1="0" y1="0" x2="0" y2="1"><stop offset="0" stop-color="#7db9f5"/><stop offset="1" stop-color="#3d86dd"/></linearGradient>
<linearGradient id="gGrn2" x1="0" y1="0" x2="0" y2="1"><stop offset="0" stop-color="#b9ea8c"/><stop offset="1" stop-color="#5dbb3b"/></linearGradient>
<linearGradient id="gRed" x1="0" y1="0" x2="0" y2="1"><stop offset="0" stop-color="#f67e5c"/><stop offset="1" stop-color="#da4a2c"/></linearGradient>
<linearGradient id="gOr" x1="0" y1="0" x2="0" y2="1"><stop offset="0" stop-color="#fcd7a2"/><stop offset="1" stop-color="#f4a95c"/></linearGradient>
<linearGradient id="gGray" x1="0" y1="0" x2="0" y2="1"><stop offset="0" stop-color="#d6d6d6"/><stop offset="1" stop-color="#9a9a9a"/></linearGradient>
<linearGradient id="gLav" x1="0" y1="0" x2="0" y2="1"><stop offset="0" stop-color="#f4f4fc"/><stop offset="1" stop-color="#c9cdea"/></linearGradient>
<linearGradient id="gDoc" x1="0" y1="0" x2="0" y2="1"><stop offset="0" stop-color="#ffffff"/><stop offset="1" stop-color="#e4e8f6"/></linearGradient>
<linearGradient id="gChev" x1="0" y1="0" x2="0" y2="1"><stop offset="0" stop-color="#8fcdfc"/><stop offset="1" stop-color="#4c9cf0"/></linearGradient>
<linearGradient id="gArr" x1="0" y1="0" x2="0" y2="1"><stop offset="0" stop-color="#c8e4fd"/><stop offset="1" stop-color="#4a98ec"/></linearGradient>
</defs></svg>
<svg style="left:26px;top:45px" width="13" height="12" viewBox="0 0 13 12"><path d="M0.5 6L6 0.5V3.5H12.5V8.5H6V11.500Z" fill="url(#gGrn2)" stroke="#63b840" stroke-width="1"/></svg>
<svg style="left:67px;top:45px" width="13" height="12" viewBox="0 0 13 12"><path d="M12.5 6L7 0.5V3.5H0.5V8.5H7V11.500Z" fill="url(#gBlueH)" stroke="#4a8fe0" stroke-width="1"/></svg>
<svg style="left:124px;top:43px" width="15" height="14" viewBox="0 0 15 14"><rect x="0.5" y="0.5" width="14" height="13" rx="1" fill="#fff" stroke="#c0cad4"/><rect x="1" y="1" width="13" height="3.5" fill="#8fd0f8"/><rect x="1" y="1" width="13" height="1" fill="#bfe4fb"/><rect x="2.5" y="6.5" width="2.5" height="4.5" fill="#7fbdf0"/><rect x="6.5" y="7" width="6" height="1" fill="#bcbcbc"/><rect x="6.5" y="10" width="6" height="1" fill="#bcbcbc"/></svg>
<svg style="left:185px;top:43px" width="16" height="16" viewBox="0 0 16 16"><circle cx="8" cy="8" r="7.5" fill="url(#gGreenR)" stroke="#3f9a26" stroke-width="1"/><path d="M3.2 8H12.8M8 3.2V12.8" stroke="#fff" stroke-width="3.2" fill="none"/></svg>
<svg style="left:247px;top:43.5px" width="14" height="14" viewBox="0 0 14 14"><path d="M5.500 0.500H10.500L13.500 3.500V10.500H5.500Z" fill="#f6f1fc" stroke="#a48cd0"/><path d="M10.500 0.500V3.500H13.500" fill="#fff" stroke="#a48cd0"/><rect x="11" y="5" width="1" height="4" fill="#c8b8e4"/><path d="M0.500 3.500H6.500L9.500 6.500V13.500H0.500Z" fill="url(#gDoc)" stroke="#8f9ad0"/><path d="M6.500 3.500V6.500H9.500" fill="#fff" stroke="#8f9ad0"/><rect x="2" y="8" width="6" height="4" fill="#bcc4e8"/><rect x="2" y="8" width="6" height="1" fill="#d4daf2"/></svg>
<svg style="left:314px;top:43px" width="15" height="15" viewBox="0 0 15 15"><rect x="0.500" y="0.500" width="14" height="14" rx="0.800" fill="#93d2f6" stroke="#62b6ea"/><rect x="1.500" y="1.500" width="1" height="12" fill="#c2e6fb"/><rect x="12.500" y="1.500" width="1" height="12" fill="#c2e6fb"/><rect x="3.500" y="1" width="8" height="5.500" fill="#fff"/><rect x="5.500" y="2.500" width="2" height="2" fill="#4da8e4"/><rect x="3" y="9" width="9" height="5.500" fill="#fff"/><rect x="5" y="11" width="2.500" height="3.500" fill="#6cbdee"/></svg>
<svg style="left:380px;top:43px" width="14" height="14" viewBox="0 0 14 14"><circle cx="7" cy="7" r="6.5" fill="url(#gGray)" stroke="#a8a8a8"/><circle cx="7" cy="7" r="5" fill="none" stroke="#d9d9d9" stroke-width="1"/><path d="M3.5 7L6 9.5L10.5 4.5" stroke="#f4f4f4" stroke-width="2" fill="none"/></svg>
<svg style="left:437px;top:44px" width="14" height="14" viewBox="0 0 14 14"><path d="M0.500 0.500H8.500L11.500 3.500V13.500H0.500Z" fill="url(#gDoc)" stroke="#93a3cf"/><path d="M8.500 0.500V3.500H11.500" fill="#fff" stroke="#93a3cf"/><rect x="2.500" y="5" width="7" height="1" fill="#c3cbe8"/><rect x="2.500" y="7" width="7" height="1" fill="#d3d9ee"/><rect x="2.500" y="8.500" width="3.500" height="4" fill="#ccd2ec"/><path d="M6.500 10L8.700 12.300L12.800 6.800" stroke="#2f7fe0" stroke-width="2" fill="none"/></svg>
<svg style="left:508px;top:44px" width="14" height="14" viewBox="0 0 14 14"><path d="M0.500 2L2.300 0.500L7 4.500L11.700 0.500L13.500 2L7 7.800Z" fill="url(#gChev)" stroke="#3f86de" stroke-width="0.900"/><path d="M0.500 7.700L2.300 6.200L7 10.200L11.700 6.200L13.500 7.700L7 13.500Z" fill="url(#gChev)" stroke="#3f86de" stroke-width="0.900"/></svg>
<svg style="left:593px;top:44px" width="13" height="14" viewBox="0 0 13 14"><rect x="0.5" y="1.5" width="11" height="12" rx="1.5" fill="url(#gOr)" stroke="#e8964a"/><rect x="3.5" y="0.5" width="5" height="2.5" rx="1" fill="#e6e6e6" stroke="#b4b4b4" stroke-width="0.7"/><rect x="5.5" y="5.5" width="7" height="8" fill="#f2f2f4" stroke="#b9b9c2"/><rect x="7" y="7" width="4" height="1" fill="#c6c8e2"/><rect x="7" y="9" width="4" height="1" fill="#c6c8e2"/><rect x="7" y="11" width="4" height="1" fill="#c6c8e2"/><rect x="8.500" y="7" width="1" height="5" fill="#d6d8ea"/></svg>
<svg style="left:675px;top:43px" width="16" height="15" viewBox="0 0 16 15"><path d="M0.500 0.500H8.500L11.500 3.500V13.500H0.500Z" fill="url(#gDoc)" stroke="#adb2e2"/><path d="M8.500 0.500V3.500H11.500" fill="#dfe6fa" stroke="#adb2e2"/><rect x="5.500" y="5.500" width="10" height="9" fill="#fff" stroke="#3aa12c"/><path d="M7.500 9.500L10.500 6.500L13.500 9.500H11.700V10.300Q11.700 13 8.300 13V11.200Q9.700 11.200 9.700 9.500Z" fill="#35a028"/></svg>
<svg style="left:747px;top:43px" width="16" height="16" viewBox="0 0 16 16"><path d="M3.500 0.500H9.500L12.500 3.500V7H3.500Z" fill="#eef5fe" stroke="#a6c8f0"/><path d="M9.500 0.500V3.500H12.500" fill="#fff" stroke="#a6c8f0"/><rect x="0.500" y="5.500" width="15" height="7" rx="2" fill="url(#gGray)" stroke="#a2a2a2"/><rect x="1.500" y="6.500" width="13" height="1.500" fill="#e6e6e6"/><rect x="3" y="10" width="10" height="1.500" fill="#6e6e6e"/><rect x="12.800" y="7" width="1.400" height="1.200" fill="#555"/><rect x="3.500" y="11.500" width="9" height="4" fill="#e6f1fd" stroke="#9cc4f2"/></svg>
<svg style="left:820px;top:44px" width="14" height="14" viewBox="0 0 14 14"><rect x="0.500" y="0.500" width="13" height="13" rx="1.500" fill="#ebe8fb" stroke="#5ab8f6"/><rect x="1" y="1" width="12" height="2" fill="#7fcbf9"/><rect x="1" y="3" width="4" height="10" fill="#fde58a"/><rect x="5" y="3" width="1" height="10" fill="#ffffff"/><path d="M2 6L3.800 4V6ZM2 9L3.800 7V9ZM2 12L3.800 10V12Z" fill="#f0622a"/></svg>
<svg style="left:904px;top:44px" width="14" height="14" viewBox="0 0 14 14"><rect x="0.500" y="0.500" width="13" height="13" rx="1.500" fill="url(#gRed)" stroke="#cf4a32"/><path d="M4 4L10 10M10 4L4 10" stroke="#fff" stroke-width="3.600" fill="none" stroke-linecap="square"/></svg>
<svg style="left:18px;top:226px" width="14" height="14" viewBox="0 0 14 14"><circle cx="7" cy="7" r="6.5" fill="url(#gGreenR)" stroke="#3f9a26" stroke-width="1"/><path d="M2.8 7H11.2M7 2.8V11.2" stroke="#fff" stroke-width="2.8" fill="none"/></svg>
<svg style="left:93px;top:226px" width="14" height="14" viewBox="0 0 14 14"><path d="M5.500 0.500H10.500L13.500 3.500V10.500H5.500Z" fill="#f6f1fc" stroke="#a48cd0"/><path d="M10.500 0.500V3.500H13.500" fill="#fff" stroke="#a48cd0"/><rect x="11" y="5" width="1" height="4" fill="#c8b8e4"/><path d="M0.500 3.500H6.500L9.500 6.500V13.500H0.500Z" fill="url(#gDoc)" stroke="#8f9ad0"/><path d="M6.500 3.500V6.500H9.500" fill="#fff" stroke="#8f9ad0"/><rect x="2" y="8" width="6" height="4" fill="#bcc4e8"/><rect x="2" y="8" width="6" height="1" fill="#d4daf2"/></svg>
<svg style="left:168px;top:226px" width="14" height="14" viewBox="0 0 14 14"><circle cx="7" cy="7" r="6.5" fill="url(#gRedR)" stroke="#c03a26" stroke-width="1"/><path d="M4.34 4.34L9.66 9.66M9.66 4.34L4.34 9.66" stroke="#fff" stroke-width="2.38" fill="none" stroke-linecap="round"/></svg>
<svg style="left:250px;top:226px" width="13" height="14" viewBox="0 0 13 14"><path d="M1.200 12.300L6.500 6.200" stroke="#c0b2e2" stroke-width="2.600" stroke-linecap="round" fill="none"/><circle cx="8.800" cy="4" r="3.700" fill="#e4eaf6" stroke="#c9cce0" stroke-width="1"/><circle cx="8.800" cy="4" r="2.500" fill="#8fe24a"/></svg>
<svg style="left:369px;top:225.5px" width="12" height="13" viewBox="0 0 12 13"><path d="M6 0.500L11.500 6.500H8.500V12.500H3.500V6.500H0.500Z" fill="url(#gArr)" stroke="#4a90e2"/></svg>
<svg style="left:420px;top:226px" width="12" height="13" viewBox="0 0 12 13"><path d="M6 12.500L11.500 6.500H8.500V0.500H3.500V6.500H0.500Z" fill="url(#gArr)" stroke="#4a90e2"/></svg>
<svg style="left:478px;top:227.5px" width="15" height="13" viewBox="0 0 15 13"><path d="M4.500 0.500L8.500 5.500H6.500V12.500H2.500V5.500H0.500Z" fill="url(#gArr)" stroke="#4a90e2"/><rect x="12" y="0" width="2" height="1.600" fill="#55b83a"/><rect x="11" y="2.800" width="3" height="1.600" fill="#55b83a"/><rect x="10.500" y="5.600" width="3.500" height="1.600" fill="#55b83a"/><rect x="10" y="8.400" width="4" height="1.600" fill="#55b83a"/><rect x="9" y="11.200" width="5" height="1.800" fill="#55b83a"/></svg>
<svg style="left:569px;top:225px" width="16" height="16" viewBox="0 0 16 16"><path d="M7.07 0.86L8.93 0.86L9.45 2.59L10.80 3.15L12.39 2.29L13.71 3.61L12.85 5.20L13.41 6.55L15.14 7.07L15.14 8.93L13.41 9.45L12.85 10.80L13.71 12.39L12.39 13.71L10.80 12.85L9.45 13.41L8.93 15.14L7.07 15.14L6.55 13.41L5.20 12.85L3.61 13.71L2.29 12.39L3.15 10.80L2.59 9.45L0.86 8.93L0.86 7.07L2.59 6.55L3.15 5.20L2.29 3.61L3.61 2.29L5.20 3.15L6.55 2.59Z" fill="#fafafa" stroke="#bababa" stroke-width="1.100" stroke-linejoin="round"/><circle cx="8" cy="8" r="3" fill="#ebebeb" stroke="#bababa" stroke-width="1.200"/></svg>
<svg style="left:663px;top:226px" width="14" height="14" viewBox="0 0 14 14"><rect x="0.500" y="0.500" width="13" height="13" fill="#dedcf4" stroke="#a4a4a8"/><rect x="1" y="5" width="12" height="4" fill="url(#gOr)"/><path d="M5 1V13M9 1V13M1 4.500H13M1 9.500H13" stroke="#f8f8fc" stroke-width="1" fill="none"/></svg>
<svg style="left:745px;top:226px" width="15" height="14" viewBox="0 0 15 14"><rect x="0.5" y="0.5" width="14" height="13" rx="1" fill="#fff" stroke="#c0cad4"/><rect x="1" y="1" width="13" height="3.5" fill="#8fd0f8"/><rect x="1" y="1" width="13" height="1" fill="#bfe4fb"/><rect x="2.5" y="6.5" width="2.5" height="4.5" fill="#7fbdf0"/><rect x="6.5" y="7" width="6" height="1" fill="#bcbcbc"/><rect x="6.5" y="10" width="6" height="1" fill="#bcbcbc"/></svg>
<svg style="left:851px;top:226px" width="14" height="14" viewBox="0 0 14 14"><path d="M0.500 2L2.300 0.500L7 4.500L11.700 0.500L13.500 2L7 7.800Z" fill="url(#gChev)" stroke="#3f86de" stroke-width="0.900"/><path d="M0.500 7.700L2.300 6.200L7 10.200L11.700 6.200L13.500 7.700L7 13.500Z" fill="url(#gChev)" stroke="#3f86de" stroke-width="0.900"/></svg>
<svg style="left:4px;top:724px" width="16" height="16" viewBox="0 0 16 16"><path d="M1.500 0.500H14.500L15.500 1.500V14.500L14.500 15.500H1.500L0.500 14.500V1.500Z" fill="#dc1c12" stroke="#d42a20"/><path d="M2.500 4L4.600 4.200L6.400 9L5.200 12.600L3.600 10Z" fill="#fff"/><path d="M5.800 10.200C7 6.500 9.500 4 12.900 2.200C11.600 5.200 9.200 7.800 7.300 10.800Z" fill="#fff"/><path d="M3.400 11.400C5.500 14.800 11.800 13.800 13.800 7C12.600 10.400 9 12.200 6 11.600Z" fill="#fff"/></svg>
<svg style="left:208px;top:725px" width="14" height="14" viewBox="0 0 14 14"><circle cx="7" cy="7" r="6.500" fill="url(#gGreenR)" stroke="#2f8f1e"/><path d="M3.500 7.200L6 9.800L10.500 4.500" stroke="#fff" stroke-width="2" fill="none"/></svg>
<svg style="left:1445px;top:726px" width="17" height="12" viewBox="0 0 17 12"><rect x="0.500" y="0.500" width="16" height="11" rx="1" fill="#f4f9fe" stroke="#7fb2e8"/><path d="M1 1L8.500 7L16 1M1 11L6.500 5.500M16 11L10.500 5.500" stroke="#7fb2e8" stroke-width="1" fill="none"/></svg>
</body></html>
